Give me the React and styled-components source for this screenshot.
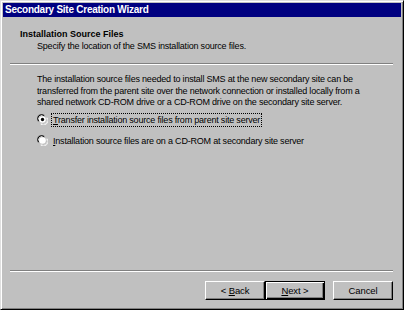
import React from "react";
import styled, { createGlobalStyle } from "styled-components";

const Global = createGlobalStyle`
  html, body { margin: 0; padding: 0; background: #c0c0c0; }
  body { font-family: "Liberation Sans", Arial, sans-serif; }
`;

const Window = styled.div`
  box-sizing: border-box;
  width: 404px;
  height: 310px;
  background: #c0c0c0;
  border: 1px solid;
  border-color: #dfdfdf #000 #000 #dfdfdf;
  box-shadow: inset 1px 1px #fff, inset -1px -1px #808080;
  padding: 2px;
  display: flex;
  flex-direction: column;
  color: #000;
  font-size: 9px;
  letter-spacing: -0.2px;
`;

const TitleBar = styled.div`
  height: 14px;
  background: #000080;
  color: #fff;
  font-weight: bold;
  font-size: 10px;
  letter-spacing: -0.25px;
  line-height: 14px;
  padding-left: 2px;
  white-space: nowrap;
`;

const Header = styled.div`
  padding: 11px 0 0 17px;
  height: 39px;
  box-sizing: border-box;
`;

const Heading = styled.div`
  font-weight: bold;
  letter-spacing: 0;
  line-height: 12px;
`;

const Sub = styled.div`
  margin-left: 17px;
  line-height: 12px;
`;

const Divider = styled.div`
  margin: ${(p) => p.$top || 0}px 8px 0 7px;
  height: 0;
  border-top: 1px solid #808080;
  border-bottom: 1px solid #fff;
`;

const Body = styled.div`
  padding: 9px 0 0 34px;
  flex: 1;
`;

const Para = styled.p`
  margin: 0;
  line-height: 11.5px;
  width: 350px;
`;

const Options = styled.div`
  margin-top: 4px;
  display: flex;
  flex-direction: column;
  gap: 7px;
`;

const Option = styled.label`
  display: flex;
  align-items: center;
  gap: 4px;
  height: 14px;
`;

const Label = styled.span`
  padding: 0 1px;
  line-height: 12px;
  outline: ${(p) => (p.$focus ? "1px dotted #000" : "none")};
`;

const U = styled.span`
  text-decoration: underline;
`;

const Footer = styled.div`
  display: flex;
  justify-content: flex-end;
  padding: 9px 8px 7px 0;
`;

const Btn = styled.div`
  box-sizing: border-box;
  width: 60px;
  height: 19px;
  margin-left: ${(p) => p.$gap || 0}px;
  background: #c0c0c0;
  border: 1px solid;
  border-color: ${(p) => (p.$def ? "#000" : "#fff #000 #000 #fff")};
  box-shadow: ${(p) =>
    p.$def
      ? "inset 1px 1px #fff, inset -1px -1px #000, inset -2px -2px #808080"
      : "inset -1px -1px #808080"};
  display: flex;
  align-items: center;
  justify-content: center;
  font-size: 9.5px;
  letter-spacing: -0.1px;
`;

const Radio = ({ checked }) => (
  <svg width="11" height="11" viewBox="0 0 12 12">
    <path d="M1 8 A5 5 0 0 1 8 1" fill="none" stroke="#808080" strokeWidth="1" />
    <path d="M2 8 A4 4 0 0 1 8 2" fill="none" stroke="#000" strokeWidth="1" />
    <circle cx="6" cy="6" r="3.6" fill="#fff" />
    <path d="M11 4 A5 5 0 0 1 4 11" fill="none" stroke="#fff" strokeWidth="1" />
    <path d="M10 4 A4 4 0 0 1 4 10" fill="none" stroke="#dfdfdf" strokeWidth="1" />
    {checked && <circle cx="6" cy="6" r="1.8" fill="#000" />}
  </svg>
);

export default function App() {
  return (
    <>
      <Global />
      <Window>
        <TitleBar>Secondary Site Creation Wizard</TitleBar>
        <Header>
          <Heading>Installation Source Files</Heading>
          <Sub>Specify the location of the SMS installation source files.</Sub>
        </Header>
        <Divider $top={7} />
        <Body>
          <Para>
            The installation source files needed to install SMS at the new secondary site can be
            transferred from the parent site over the network connection or installed locally from a
            shared network CD-ROM drive or a CD-ROM drive on the secondary site server.
          </Para>
          <Options>
            <Option>
              <Radio checked />
              <Label $focus>
                <U>T</U>ransfer installation source files from parent site server
              </Label>
            </Option>
            <Option>
              <Radio />
              <Label>
                <U>I</U>nstallation source files are on a CD-ROM at secondary site server
              </Label>
            </Option>
          </Options>
        </Body>
        <Divider />
        <Footer>
          <Btn>
            &lt;&nbsp;<U>B</U>ack
          </Btn>
          <Btn $def>
            <U>N</U>ext&nbsp;&gt;
          </Btn>
          <Btn $gap={8}>Cancel</Btn>
        </Footer>
      </Window>
    </>
  );
}
